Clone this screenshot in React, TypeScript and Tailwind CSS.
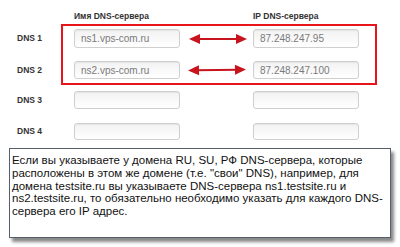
import React from 'react'

const font = { fontFamily: '"Liberation Sans", Arial, sans-serif' }

const Field: React.FC<{ value?: string; className?: string }> = ({ value, className }) => (
  <div
    className={`w-[106px] flex items-center px-[6px] rounded-[3px] border border-[#cfcfcf] bg-gradient-to-b from-[#f2f2f2] to-white text-[10px] text-[#7a7a7a] shadow-[inset_0_1px_1px_rgba(0,0,0,0.06)] ${className ?? ''}`}
  >
    {value}
  </div>
)

const Arrow: React.FC<{ tilt?: boolean }> = ({ tilt }) => (
  <svg width="58" height="12" viewBox="0 0 58 12" className="shrink-0">
    <g transform={tilt ? 'rotate(-1 29 6)' : undefined}>
      <line x1="8" y1="6" x2="50" y2="6" stroke="#c8141c" strokeWidth="2" />
      <polygon points="0,6 11,1 11,11" fill="#c8141c" />
      <polygon points="58,6 47,1 47,11" fill="#c8141c" />
    </g>
  </svg>
)

const Label: React.FC<{ children: React.ReactNode; className: string }> = ({ children, className }) => (
  <div className={`flex items-center pl-[17px] text-[8.5px] font-bold text-[#333] ${className}`}>{children}</div>
)

export default function App() {
  return (
    <div className="w-[400px] h-[247px] bg-white overflow-hidden" style={font}>
      <div className="flex">
        {/* row labels */}
        <div className="w-[61px] flex flex-col pt-[29px]">
          <Label className="h-[19px]">DNS 1</Label>
          <Label className="h-[18px] mt-[13px]">DNS 2</Label>
          <Label className="h-[18px] mt-[12px]">DNS 3</Label>
          <Label className="h-[17px] mt-[14px]">DNS 4</Label>
        </div>

        <div className="flex flex-col pt-[10px]">
          {/* column headers */}
          <div className="flex h-[12px] items-center pl-[13px] text-[8.5px] font-bold text-[#333]">
            <span className="w-[179px]">Имя DNS-сервера</span>
            <span>IP DNS-сервера</span>
          </div>

          {/* highlighted rows */}
          <div className="mt-[2px] w-[316px] border-2 border-[#e8141c] pt-[3px] pb-[4px] pl-[11px] flex flex-col gap-[13px]">
            <div className="flex items-center">
              <Field value="ns1.vps-com.ru" className="h-[19px]" />
              <div className="w-[73px] flex justify-center pl-[2px]">
                <Arrow />
              </div>
              <Field value="87.248.247.95" className="h-[19px]" />
            </div>
            <div className="flex items-center">
              <Field value="ns2.vps-com.ru" className="h-[18px]" />
              <div className="w-[73px] flex justify-center">
                <Arrow tilt />
              </div>
              <Field value="87.248.247.100" className="h-[18px]" />
            </div>
          </div>

          <div className="flex pl-[13px] mt-[6px]">
            <Field className="h-[18px]" />
            <div className="w-[73px]" />
            <Field className="h-[18px]" />
          </div>
          <div className="flex pl-[13px] mt-[14px]">
            <Field className="h-[17px]" />
            <div className="w-[73px]" />
            <Field className="h-[17px]" />
          </div>
        </div>
      </div>

      {/* note */}
      <div className="ml-[9px] mt-[8px] w-[382px] h-[90px] border border-[#56606c] bg-white shadow-[3px_4px_3px_rgba(40,40,40,0.55)] px-[2px] pt-[5px] text-[11.5px] leading-[12.8px] text-[#111]">
        Если вы указываете у домена RU, SU, РФ DNS-сервера, которые
        <br />
        расположены в этом же домене (т.е. "свои" DNS), например, для
        <br />
        домена testsite.ru вы указываете DNS-сервера ns1.testsite.ru и
        <br />
        ns2.testsite.ru, то обязательно необходимо указать для каждого DNS-
        <br />
        сервера его IP адрес.
      </div>
    </div>
  )
}
